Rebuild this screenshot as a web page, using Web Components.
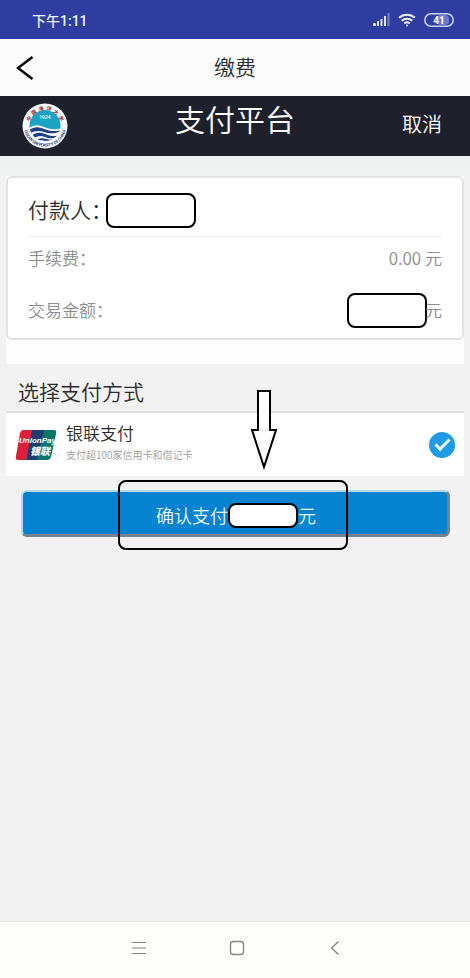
<!DOCTYPE html>
<html lang="zh-CN">
<head>
<meta charset="UTF-8">
<meta name="viewport" content="width=device-width, initial-scale=1">
<title>缴费</title>
<style>
    body {
        margin: 0;
        font-family: "Noto Sans CJK SC", sans-serif;
        font-weight: 350;
        color: #2c2c2c;
        background: #f2f2f2;
    }
</style>
</head>
<body>
<pay-app></pay-app>

<script>
/**
 * Base class: opens a shadow root and fills it with the element's template
 */
class BaseElement extends HTMLElement {
    constructor() {
        super();
        this.attachShadow({ mode: 'open' });
    }

    connectedCallback() {
        this.shadowRoot.innerHTML = `
            <style>
                * { box-sizing: border-box; }
                button {
                    font: inherit;
                    color: inherit;
                    background: none;
                    border: none;
                    margin: 0;
                    padding: 0;
                    cursor: pointer;
                }
                svg { display: block; }
            </style>
            ${this.template()}
        `;
    }
}

/**
 * Phone status bar
 */
class StatusBar extends BaseElement {
    template() {
        return `
            <style>
                :host {
                    display: flex;
                    align-items: center;
                    justify-content: space-between;
                    height: 39px;
                    padding: 0 16px 0 32px;
                    box-sizing: border-box;
                    background: #303da0;
                    color: #eef0ff;
                    font-family: Roboto, "Noto Sans CJK SC", sans-serif;
                    font-size: 14px;
                    font-weight: 500;
                }
                .icons { display: flex; align-items: center; gap: 8px; }
            </style>
            <span>下午1:11</span>
            <div class="icons">
                <svg width="17" height="13" viewBox="0 0 17 13" fill="#dfe3fb">
                    <rect x="0" y="10" width="3" height="3" rx="1"/>
                    <rect x="4" y="8" width="2" height="5"/>
                    <rect x="7.500" y="6" width="2" height="7"/>
                    <rect x="11" y="3" width="2" height="10"/>
                    <rect x="14.500" y="0" width="2" height="13" opacity=".4"/>
                </svg>
                <svg width="18" height="14" viewBox="0 0 18 14" fill="none" stroke="#eef0ff" stroke-width="2">
                    <path d="M1 4.800C5.500 .6 12.500 .6 17 4.800"/>
                    <path d="M3.700 7.800c3-2.800 7.600-2.800 10.600 0"/>
                    <path d="M6.300 10.500c1.600-1.400 3.800-1.400 5.400 0"/>
                    <circle cx="9" cy="12.500" r="1" fill="#eef0ff" stroke="none"/>
                </svg>
                <svg width="30" height="14" viewBox="0 0 30 14">
                    <rect x="13" y="2" width="12" height="10" rx="4" fill="#6f79c4"/>
                    <rect x=".8" y=".8" width="28.400" height="12.400" rx="6.200" fill="none" stroke="#cdd2f5" stroke-width="1.500"/>
                    <text x="15" y="11" text-anchor="middle" fill="#fff" font-family="Roboto, sans-serif" font-size="10" font-weight="700">41</text>
                </svg>
            </div>
        `;
    }
}

/**
 * App title bar with back button
 */
class TitleBar extends BaseElement {
    template() {
        return `
            <style>
                :host {
                    display: grid;
                    grid-template-columns: 48px 1fr 48px;
                    align-items: center;
                    height: 57px;
                    background: #fbfbfb;
                }
                button { padding-left: 16px; }
                h1 {
                    margin: 0;
                    padding-bottom: 4px;
                    text-align: center;
                    font-size: 21px;
                    line-height: 32px;
                    font-weight: inherit;
                }
            </style>
            <button type="button" aria-label="返回">
                <svg width="18" height="24" viewBox="0 0 18 24" fill="none" stroke="#0a0a0a" stroke-width="2.500">
                    <path d="M16.500 1L2 12l14.500 11"/>
                </svg>
            </button>
            <h1><slot></slot></h1>
        `;
    }
}

/**
 * University emblem
 */
class SchoolLogo extends BaseElement {
    template() {
        // the six characters stand along the upper rim
        const rim = [...'中国海洋大学'].map((char, i) => `
            <text x="23" y="7" text-anchor="middle" transform="rotate(${-65 + i * 26} 23 23)">${char}</text>
        `).join('');

        return `
            <style>:host { display: block; }</style>
            <svg width="46" height="46" viewBox="0 0 46 46">
                <defs>
                    <path id="bottom" d="M1.500 22a21.500 21.500 0 0 0 43 0"/>
                    <clipPath id="disc"><circle cx="23" cy="22.500" r="15.500"/></clipPath>
                </defs>
                <circle cx="23" cy="23" r="22.500" fill="#f6f8fc"/>
                <g clip-path="url(#disc)">
                    <rect width="46" height="28" fill="#1ba3c4"/>
                    <path d="M6 26c6-5 11-4 16-2s11 4 19 0v18H6z" fill="#f6f8fc"/>
                    <path d="M7 27c6-4 10-3 15-1s11 3 18 1c-6 4-12 4-18 2s-9-1-14 1z" fill="#1c3f8c"/>
                    <path d="M9 33c5-4 9-4 14-2s9 3 15 1c-5 4-10 4-15 2s-8-1-12 2z" fill="#1c3f8c"/>
                    <path d="M15 37c3-2 6-2 9-1s6 1 9 0c-4 3-7 3-10 2s-4-1-6 0z" fill="#1c3f8c"/>
                </g>
                <text x="23" y="16" text-anchor="middle" fill="#d9f4f8" font-size="5" font-family="Roboto, sans-serif" font-weight="700">1924</text>
                <g fill="#a8443c" font-size="5" font-family="Roboto, 'Noto Sans CJK SC', sans-serif" font-weight="900">${rim}</g>
                <text fill="#233a80" font-size="4" font-family="Roboto, sans-serif" font-weight="700"><textPath href="#bottom" startOffset="50%" text-anchor="middle">OCEAN UNIVERSITY OF CHINA</textPath></text>
            </svg>
        `;
    }
}

/**
 * Dark header of the payment platform
 */
class PlatformHeader extends BaseElement {
    template() {
        return `
            <style>
                :host {
                    display: grid;
                    grid-template-columns: 1fr auto 1fr;
                    align-items: center;
                    height: 60px;
                    padding: 0 22px;
                    box-sizing: border-box;
                    background: #1e212c;
                    color: #fff;
                }
                h2 {
                    margin: 0;
                    align-self: start;
                    font-size: 30px;
                    line-height: 44px;
                    font-weight: inherit;
                }
                button {
                    justify-self: end;
                    padding: 0 6px 4px 0;
                    font-size: 20px;
                    line-height: 30px;
                }
            </style>
            <school-logo></school-logo>
            <h2><slot></slot></h2>
            <button type="button">取消</button>
        `;
    }
}

/**
 * Blank rounded box that covers a private value
 */
class MaskBox extends BaseElement {
    template() {
        return `
            <style>
                :host {
                    display: block;
                    box-sizing: border-box;
                    width: var(--mask-width, 80px);
                    height: var(--mask-height, 35px);
                    border: 2px solid #000;
                    border-radius: 8px;
                    background: #fff;
                }
            </style>
        `;
    }
}

/**
 * Card with payer, fee and amount
 */
class PaymentSummary extends BaseElement {
    template() {
        return `
            <style>
                :host { display: block; margin: 20px 6px 0; padding-bottom: 24px; background: #fdfdfd; }
                .card {
                    border: 2px solid #e2e2e2;
                    border-radius: 6px;
                    background: #fff;
                    padding: 0 20px;
                    height: 164px;
                }
                .payer {
                    display: flex;
                    align-items: center;
                    height: 59px;
                    padding-top: 6px;
                    border-bottom: 1px solid #eee;
                    font-size: 21px;
                    --mask-width: 90px;
                }
                .payer span { padding-bottom: 2px; }
                .payer mask-box { margin-left: -6px; }
                dl { margin: 0; color: #8c8c8c; font-size: 17px; line-height: 24px; }
                .line {
                    display: flex;
                    align-items: center;
                    justify-content: space-between;
                    height: 42px;
                }
                .line + .line { height: 62px; }
                dt, dd { margin: 0; }
                dd { display: flex; align-items: center; }
                dd mask-box { margin-right: -2px; }
            </style>
            <div class="card">
                <div class="payer"><span>付款人：</span><mask-box></mask-box></div>
                <dl>
                    <div class="line"><dt>手续费：</dt><dd>0.00 元</dd></div>
                    <div class="line"><dt>交易金额：</dt><dd><mask-box></mask-box>元</dd></div>
                </dl>
            </div>
        `;
    }
}

/**
 * Selectable payment method
 */
class PaymentMethod extends BaseElement {
    template() {
        return `
            <style>
                :host { display: block; margin: 0 6px; border-top: 2px solid #dedede; background: #fff; }
                label {
                    display: flex;
                    align-items: center;
                    gap: 8px;
                    height: 63px;
                    padding: 0 9px;
                }
                .text { flex: 1; padding-bottom: 6px; }
                .name { font-size: 17px; line-height: 26px; }
                .note { font-size: 10px; line-height: 18px; color: #999; }
                input {
                    appearance: none;
                    margin: 0;
                    width: 26px;
                    height: 26px;
                    border-radius: 50%;
                    border: 1px solid #bbb;
                }
                input:checked {
                    border: none;
                    background: #1d9be6;
                    display: grid;
                    place-items: center;
                }
                input:checked::before {
                    content: "";
                    width: 15px;
                    height: 8px;
                    border: solid #e9f8ff;
                    border-width: 0 0 3px 3px;
                    transform: translateY(-2px) rotate(-45deg);
                    box-sizing: border-box;
                }
            </style>
            <label>
                <svg width="43" height="32" viewBox="0 0 43 32">
                    <path d="M8 1h10l-7 30H3q-3 0-2-4L5 4q1-3 3-3z" fill="#dd2039"/>
                    <path d="M17 1h14l-7 30H11z" fill="#203c70"/>
                    <path d="M29 1h10q3 0 2 4l-5 23q-1 3-4 3H22z" fill="#0c7569"/>
                    <text x="4" y="14" fill="#fff" font-family="Liberation Sans, sans-serif" font-size="8" font-weight="700" font-style="italic">UnionPay</text>
                    <text x="15" y="26" fill="#fff" font-family="Liberation Sans, 'Noto Sans CJK SC', sans-serif" font-size="10" font-weight="900" font-style="italic">银联</text>
                </svg>
                <div class="text">
                    <div class="name"><slot></slot></div>
                    <div class="note"><slot name="note"></slot></div>
                </div>
                <input type="radio" name="method" checked>
            </label>
        `;
    }
}

/**
 * Confirm button with the hint frame and arrow drawn over it
 */
class ConfirmPay extends BaseElement {
    template() {
        return `
            <style>
                :host { display: block; position: relative; margin: 14px 20px 0 21px; }
                button {
                    display: flex;
                    align-items: center;
                    justify-content: center;
                    width: 100%;
                    height: 47px;
                    padding: 4px 0 0 2px;
                    border: solid;
                    border-width: 2px 3px 3px 2px;
                    border-color: #b4d9ee #77838c #77838c #b4d9ee;
                    border-radius: 6px;
                    background: #0583d0;
                    color: #e9f8ff;
                    font-size: 18px;
                    --mask-width: 70px;
                    --mask-height: 25px;
                }
                mask-box { flex: none; }
                .frame {
                    position: absolute;
                    left: calc(50% - 118px);
                    top: -10px;
                    width: 230px;
                    height: 70px;
                    border: 2px solid #000;
                    border-radius: 8px;
                    pointer-events: none;
                }
                .arrow {
                    position: absolute;
                    left: calc(50% + 15px);
                    top: -100px;
                    pointer-events: none;
                }
            </style>
            <button type="button"><span>确认支付</span><mask-box></mask-box><span>元</span></button>
            <div class="frame"></div>
            <svg class="arrow" width="26" height="80" viewBox="0 0 26 80" fill="#fff" stroke="#000" stroke-width="2">
                <path d="M7 1h12v39h6L13 77 1 40h6z"/>
            </svg>
        `;
    }
}

/**
 * System navigation buttons
 */
class NavBar extends BaseElement {
    template() {
        return `
            <style>
                :host {
                    display: flex;
                    align-items: center;
                    justify-content: center;
                    gap: 82px;
                    height: 57px;
                    padding: 0 0 4px 4px;
                    box-sizing: border-box;
                    border-top: 1px solid #e8e8e8;
                    background: #fdfdfc;
                }
            </style>
            <button type="button" aria-label="菜单">
                <svg width="16" height="16" viewBox="0 0 16 16" stroke="#858585" stroke-width="1.200">
                    <path d="M1 2.500h14M1 8h14M1 13.500h14"/>
                </svg>
            </button>
            <button type="button" aria-label="主页">
                <svg width="16" height="16" viewBox="0 0 16 16" fill="none" stroke="#858585" stroke-width="1.400">
                    <rect x="1.500" y="1.500" width="13" height="13" rx="3"/>
                </svg>
            </button>
            <button type="button" aria-label="返回">
                <svg width="16" height="16" viewBox="0 0 16 16" fill="none" stroke="#858585" stroke-width="1.400">
                    <path d="M11.500 1.500L4.500 8l7 6.500"/>
                </svg>
            </button>
        `;
    }
}

/**
 * Whole page
 */
class PayApp extends BaseElement {
    template() {
        return `
            <style>
                :host { display: flex; flex-direction: column; min-height: 100vh; }
                main { flex: 1; background: linear-gradient(#edf1f0, #f2f2f2 20px); display: flow-root; }
                h3 {
                    margin: 0;
                    padding: 9px 18px 2px;
                    font-size: 21px;
                    line-height: 36px;
                    font-weight: inherit;
                }
            </style>
            <status-bar></status-bar>
            <title-bar>缴费</title-bar>
            <platform-header>支付平台</platform-header>
            <main>
                <payment-summary></payment-summary>
                <h3>选择支付方式</h3>
                <payment-method>银联支付<span slot="note">支付超100家信用卡和借记卡</span></payment-method>
                <confirm-pay></confirm-pay>
            </main>
            <nav-bar></nav-bar>
        `;
    }
}

customElements.define('status-bar', StatusBar);
customElements.define('title-bar', TitleBar);
customElements.define('school-logo', SchoolLogo);
customElements.define('platform-header', PlatformHeader);
customElements.define('mask-box', MaskBox);
customElements.define('payment-summary', PaymentSummary);
customElements.define('payment-method', PaymentMethod);
customElements.define('confirm-pay', ConfirmPay);
customElements.define('nav-bar', NavBar);
customElements.define('pay-app', PayApp);
</script>
</body>
</html>
